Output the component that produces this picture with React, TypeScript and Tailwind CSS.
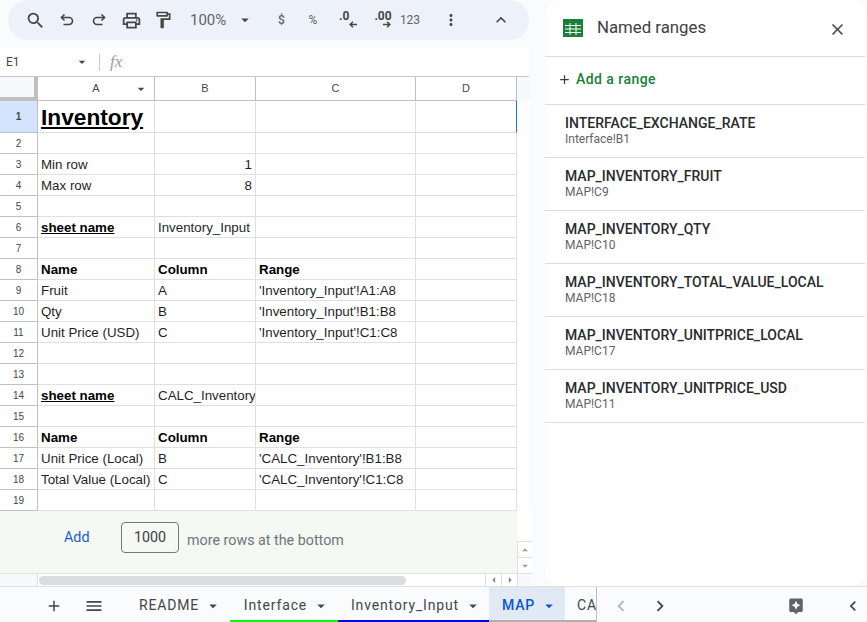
import { ReactNode } from "react";
import {
  MdSearch,
  MdOutlinePrint,
  MdOutlineFormatPaint,
  MdMoreVert,
  MdExpandLess,
  MdClose,
  MdAdd,
  MdMenu,
  MdChevronLeft,
  MdChevronRight,
  MdAssistant,
  MdArrowDropDown,
  MdArrowDropUp,
  MdArrowLeft,
  MdArrowRight,
} from "react-icons/md";

type Cell = { text?: string; className?: string };

const rowHeights = [32, ...Array(18).fill(21)];

const rows: Record<number, Cell[]> = {
  1: [{ text: "Inventory", className: "font-bold underline text-[22.7px] text-black" }],
  3: [{ text: "Min row" }, { text: "1", className: "justify-end" }],
  4: [{ text: "Max row" }, { text: "8", className: "justify-end" }],
  6: [{ text: "sheet name", className: "font-bold underline text-black" }, { text: "Inventory_Input" }],
  8: [
    { text: "Name", className: "font-bold text-black" },
    { text: "Column", className: "font-bold text-black" },
    { text: "Range", className: "font-bold text-black" },
  ],
  9: [{ text: "Fruit" }, { text: "A" }, { text: "'Inventory_Input'!A1:A8" }],
  10: [{ text: "Qty" }, { text: "B" }, { text: "'Inventory_Input'!B1:B8" }],
  11: [{ text: "Unit Price (USD)" }, { text: "C" }, { text: "'Inventory_Input'!C1:C8" }],
  14: [{ text: "sheet name", className: "font-bold underline text-black" }, { text: "CALC_Inventory" }],
  16: [
    { text: "Name", className: "font-bold text-black" },
    { text: "Column", className: "font-bold text-black" },
    { text: "Range", className: "font-bold text-black" },
  ],
  17: [{ text: "Unit Price (Local)" }, { text: "B" }, { text: "'CALC_Inventory'!B1:B8" }],
  18: [{ text: "Total Value (Local)" }, { text: "C" }, { text: "'CALC_Inventory'!C1:C8" }],
};

const namedRanges = [
  ["INTERFACE_EXCHANGE_RATE", "Interface!B1"],
  ["MAP_INVENTORY_FRUIT", "MAP!C9"],
  ["MAP_INVENTORY_QTY", "MAP!C10"],
  ["MAP_INVENTORY_TOTAL_VALUE_LOCAL", "MAP!C18"],
  ["MAP_INVENTORY_UNITPRICE_LOCAL", "MAP!C17"],
  ["MAP_INVENTORY_UNITPRICE_USD", "MAP!C11"],
];

function Slot({ w, children }: { w: string; children: ReactNode }) {
  return <div className={`${w} shrink-0 flex items-center justify-center`}>{children}</div>;
}

function TurnArrow({ flip }: { flip?: boolean }) {
  return (
    <svg width="16" height="16" viewBox="0 0 16 16" fill="none" stroke="#444746" strokeWidth="1.6" className={flip ? "-scale-x-100" : ""}>
      <path d="M5.5 2.5 2.5 5.5l3 3" />
      <path d="M2.5 5.5H10a3.5 3.5 0 0 1 0 7H4.5" />
    </svg>
  );
}

function SmallArrow({ flip }: { flip?: boolean }) {
  return (
    <svg width="8" height="7" viewBox="0 0 8 7" fill="none" stroke="#444746" strokeWidth="1.5" className={flip ? "-scale-x-100" : ""}>
      <path d="M0 3.5h7M4 .7l3 2.8-3 2.8" />
    </svg>
  );
}

function Toolbar() {
  return (
    <div className="ml-2 h-[40px] shrink-0 rounded-full bg-[#edf2fa] flex items-center pl-[11px] text-[#444746] font-['Roboto',sans-serif]">
      <Slot w="w-[32px]"><MdSearch size={21} /></Slot>
      <Slot w="w-[32px]"><TurnArrow /></Slot>
      <Slot w="w-[32px]"><TurnArrow flip /></Slot>
      <Slot w="w-[32px]"><MdOutlinePrint size={21} /></Slot>
      <Slot w="w-[32px]"><MdOutlineFormatPaint size={20} /></Slot>
      <div className="w-[45px] ml-[11px] shrink-0 text-[15px] text-[#5f6368]">100%</div>
      <Slot w="w-[20px]"><MdArrowDropDown size={18} /></Slot>
      <div className="w-px h-[21px] bg-[#c7c7c7] ml-[8px]" />
      <Slot w="w-[37px]"><span className="text-[12px] font-medium text-[#5f6368]">$</span></Slot>
      <Slot w="w-[26px]"><span className="text-[12px] text-[#5f6368]">%</span></Slot>
      <Slot w="w-[46px]">
        <span className="flex flex-col leading-none -mt-[3px]">
          <span className="text-[12px] font-bold leading-[12px] -ml-[2px]">.0</span>
          <span className="ml-[8px] -mt-[1px] flex"><SmallArrow flip /></span>
        </span>
      </Slot>
      <Slot w="w-[22px]">
        <span className="flex flex-col leading-none -mt-[3px]">
          <span className="text-[12px] font-bold leading-[12px]">.00</span>
          <span className="ml-[9px] -mt-[1px] flex"><SmallArrow /></span>
        </span>
      </Slot>
      <Slot w="w-[32px]"><span className="text-[12px] text-[#5f6368]">123</span></Slot>
      <div className="w-px h-[21px] bg-[#c7c7c7] ml-[5px]" />
      <Slot w="w-[40px]"><MdMoreVert size={18} /></Slot>
      <Slot w="w-[60px]"><MdExpandLess size={20} /></Slot>
    </div>
  );
}

function FormulaBar() {
  return (
    <div className="mt-[8px] h-[29px] shrink-0 bg-white flex items-center border-b border-[#c4c7c5] font-['Roboto',sans-serif]">
      <span className="ml-[6px] w-[68px] text-[12px] text-[#444746]">E1</span>
      <MdArrowDropDown size={16} className="text-[#444746]" />
      <div className="w-px h-[17px] bg-[#c7c7c7] ml-[9px]" />
      <span className="ml-[10px] text-[17px] italic text-[#9aa0a6] font-['Liberation_Serif',serif]">fx</span>
    </div>
  );
}

function Sheet() {
  const cols = [
    { label: "A", w: "w-[117px]" },
    { label: "B", w: "w-[101px]" },
    { label: "C", w: "w-[160px]" },
    { label: "D", w: "w-[101px]" },
  ];
  return (
    <div className="shrink-0 font-['Liberation_Sans',sans-serif] text-[13.33px] text-[#1f1f1f]">
      <div className="flex h-[24px]">
        <div className="w-[38px] bg-[#f8f9fa] border-r-[4px] border-b-[4px] border-[#c0c0c0]" />
        {cols.map((c) => (
          <div
            key={c.label}
            className={`${c.w} relative flex items-center justify-center bg-white border-r border-b border-[#c0c0c0] text-[11px] text-[#444746]`}
          >
            {c.label}
            {c.label === "A" && <MdArrowDropDown size={16} className="absolute right-[5px] top-[4px]" />}
          </div>
        ))}
        <div className="flex-1 bg-[#f8f9fa]" />
      </div>
      {rowHeights.map((h, i) => {
        const n = i + 1;
        const cells = rows[n] ?? [];
        return (
          <div key={n} className={`flex ${h === 32 ? "h-[32px]" : "h-[21px]"}`}>
            <div
              className={`w-[38px] flex items-center justify-center border-r border-b border-[#c0c0c0] text-[10px] text-[#444746] ${
                n === 1 ? "bg-[#d3e3fd] font-bold" : "bg-white"
              }`}
            >
              {n}
            </div>
            {cols.map((c, ci) => (
              <div
                key={c.label}
                className={`${c.w} bg-white flex items-center px-[3px] pt-px overflow-hidden whitespace-nowrap border-r border-b border-[#e0e0e0] ${cells[ci]?.className ?? ""} ${
                  n === 1 && ci === 3 ? "border-r-[#1a73e8]" : ""
                }`}
              >
                {cells[ci]?.text}
              </div>
            ))}
            <div className="flex-1 bg-white" />
          </div>
        );
      })}
    </div>
  );
}

function AddRows() {
  return (
    <div className="flex h-[63px] shrink-0 font-['Roboto',sans-serif]">
      <div className="w-[517px] shrink-0 bg-[#f6f8f4] border-b border-[#e0e0e0] flex items-start pt-[11px] pl-[64px]">
        <span className="w-[57px] text-[14.3px] leading-[30px] text-[#1a5fcf]">Add</span>
        <div className="w-[58px] h-[31px] rounded-[4px] border border-[#747775] flex items-center justify-center text-[14.3px] text-[#3c4043]">
          1000
        </div>
        <span className="ml-[8px] mt-[8px] text-[14.3px] text-[#70757a]">more rows at the bottom</span>
      </div>
      <div className="flex-1 flex flex-col justify-end bg-white text-[#a0a0a0]">
        <div className="h-[16px] border-t border-l border-[#e0e0e0] flex items-center justify-center"><MdArrowDropUp size={14} /></div>
        <div className="h-[17px] border-t border-b border-l border-[#e0e0e0] flex items-center justify-center"><MdArrowDropDown size={14} /></div>
      </div>
    </div>
  );
}

function HScroll() {
  return (
    <div className="h-[12px] shrink-0 flex bg-white text-[#8a8a8a]">
      <div className="w-[38px] shrink-0 border-r border-[#e0e0e0] bg-[#f8f9fa]" />
      <div className="w-[447px] shrink-0 flex items-center pl-px">
        <div className="w-[367px] h-[9px] rounded-full bg-[#dadce0]" />
      </div>
      <div className="w-[16px] shrink-0 border-l border-[#e0e0e0] flex items-center justify-center"><MdArrowLeft size={14} /></div>
      <div className="w-[16px] shrink-0 border-l border-[#e0e0e0] flex items-center justify-center"><MdArrowRight size={14} /></div>
      <div className="flex-1 border-l border-[#e0e0e0] bg-[#f8f9fa]" />
    </div>
  );
}

function SheetsIcon() {
  return (
    <svg width="20" height="18" viewBox="0 0 20 18">
      <rect x="0" y="0" width="20" height="18" fill="#188038" />
      <g fill="#fff">
        <rect x="2" y="6" width="16" height="1" />
        <rect x="2" y="9.5" width="16" height="1" />
        <rect x="2" y="13" width="16" height="1" />
        <rect x="6.5" y="4" width="1" height="12" />
        <rect x="12.5" y="4" width="1" height="12" />
      </g>
    </svg>
  );
}

function Panel() {
  return (
    <div className="ml-[16px] w-[320px] h-[586px] bg-white rounded-[16px] font-['Roboto',sans-serif]">
      <div className="h-[57px] flex items-center border-b border-[#dadce0] pl-[18px] pr-[18px]">
        <SheetsIcon />
        <span className="ml-[14px] text-[16.8px] text-[#3c4043]">Named ranges</span>
        <MdClose size={19} className="ml-auto mt-[2px] text-[#444746]" />
      </div>
      <div className="h-[48px] flex items-center border-b border-[#dadce0] pl-[12px] pb-[2px]">
        <MdAdd size={15} className="text-[#3c4043]" />
        <span className="ml-[4px] text-[14px] font-medium tracking-[0.45px] text-[#188038]">Add a range</span>
      </div>
      {namedRanges.map(([name, ref]) => (
        <div key={name} className="h-[53px] border-b border-[#dadce0] pl-[20px] pt-[10px]">
          <div className="text-[14px] leading-[17px] font-medium text-[#2a2b2e]">{name}</div>
          <div className="text-[12px] leading-[15px] text-[#5f6368]">{ref}</div>
        </div>
      ))}
    </div>
  );
}

function Tab({ name, w, barClass, active }: { name: string; w: string; barClass: string; active?: boolean }) {
  return (
    <div className={`${w} h-[35px] shrink-0 flex flex-col ${active ? "bg-[#e1e9f5]" : ""}`}>
      <div className={`flex-1 pt-[4px] pl-[6px] flex items-center justify-center gap-[5px] text-[14px] tracking-[0.85px] ${active ? "text-[#0b57d0] font-medium" : "text-[#444746]"}`}>
        <span>{name}</span>
        <MdArrowDropDown size={18} />
      </div>
      <div className={`h-[2px] ${barClass}`} />
    </div>
  );
}

function TabBar() {
  return (
    <div className="h-[36px] shrink-0 flex items-center border-t border-[#e0e0e0] bg-[#f9fbfd] text-[#444746] font-['Roboto',sans-serif]">
      <div className="w-[44px] shrink-0" />
      <Slot w="w-[20px] mt-[3px]"><MdAdd size={18} /></Slot>
      <Slot w="w-[20px] ml-[20px] mt-[3px]"><MdMenu size={20} /></Slot>
      <div className="w-[21px] shrink-0" />
      <Tab name="README" w="w-[105px]" barClass="bg-transparent" />
      <Tab name="Interface" w="w-[108px]" barClass="bg-[#00ff00]" />
      <Tab name="Inventory_Input" w="w-[151px]" barClass="bg-[#0000ff]" />
      <Tab name="MAP" w="w-[76px]" barClass="bg-[#b0b0b0]" active />
      <div className="w-[32px] h-[35px] shrink-0 flex flex-col border-r border-r-[#bdbdbd]">
        <div className="flex-1 pt-[4px] flex items-center pl-[12px] text-[14px] tracking-[0.85px] overflow-hidden">CA</div>
        <div className="h-[2px] bg-[#b0b0b0]" />
      </div>
      <Slot w="w-[24px] ml-[12px] mt-[3px]"><MdChevronLeft size={22} className="text-[#b5b5b5]" /></Slot>
      <Slot w="w-[24px] ml-[15px] mt-[3px]"><MdChevronRight size={22} /></Slot>
      <Slot w="w-[20px] ml-[114px] mt-[3px]"><MdAssistant size={18} className="text-[#5f6368]" /></Slot>
      <Slot w="w-[20px] ml-[37px] mt-[3px]"><MdChevronLeft size={20} /></Slot>
    </div>
  );
}

export default function App() {
  return (
    <div className="w-[867px] h-[622px] overflow-hidden bg-[#f9fbfd] flex flex-col">
      <div className="flex h-[586px] shrink-0">
        <div className="w-[529px] shrink-0 flex flex-col">
          <Toolbar />
          <FormulaBar />
          <Sheet />
          <AddRows />
          <HScroll />
        </div>
        <Panel />
      </div>
      <TabBar />
    </div>
  );
}
